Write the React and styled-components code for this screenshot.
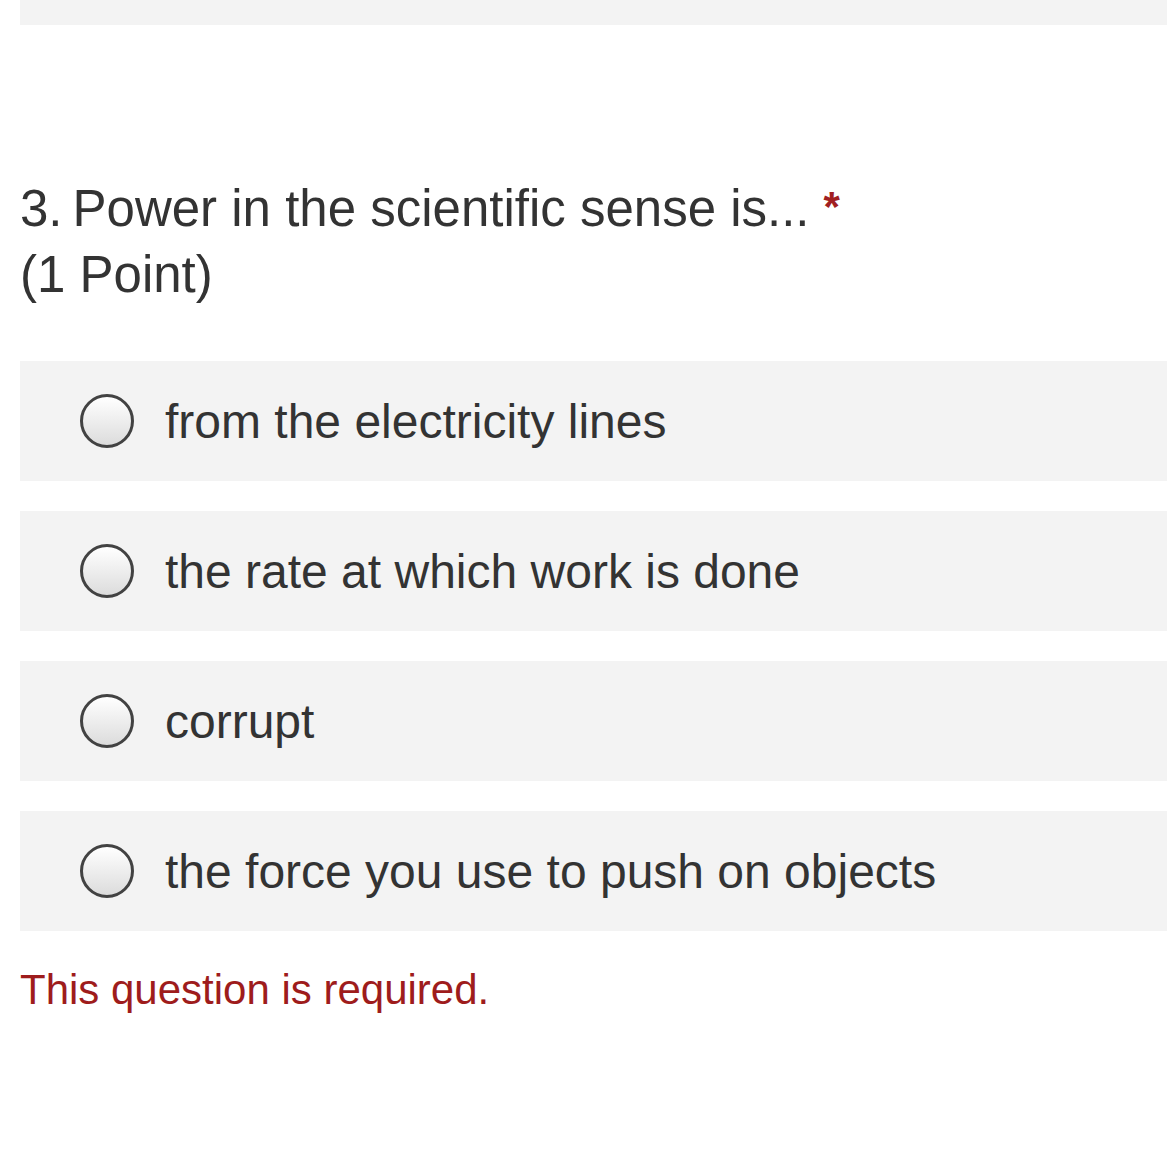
import React from "react";
import styled, { createGlobalStyle } from "styled-components";

const options = [
	"from the electricity lines",
	"the rate at which work is done",
	"corrupt",
	"the force you use to push on objects",
];

function App() {
	return (
		<>
			<GlobalStyle />
			<Page>
				<PrevBlock />
				<Title>
					<Number>3.</Number>
					Power in the scientific sense is...
					<Required>*</Required>
					<br />
					(1 Point)
				</Title>
				<Options>
					{options.map((text) => (
						<Option key={text}>
							<Radio />
							<Label>{text}</Label>
						</Option>
					))}
				</Options>
				<Error>This question is required.</Error>
			</Page>
		</>
	);
}

export default App;

const GlobalStyle = createGlobalStyle`
	html, body {
		margin: 0;
		padding: 0;
		background: #ffffff;
	}
	body {
		font-family: "Liberation Sans", Arial, sans-serif;
		color: #333333;
	}
`;

const Page = styled.div`
	padding-left: 20px;
	min-height: 1167px;
	box-sizing: border-box;
`;

const PrevBlock = styled.div`
	height: 25px;
	background: #f3f3f3;
`;

const Title = styled.div`
	margin-top: 151px;
	font-size: 51px;
	line-height: 66px;
	color: #333333;
`;

const Number = styled.span`
	margin-right: 10px;
`;

const Required = styled.span`
	color: #a11f22;
	font-size: 42px;
	font-weight: bold;
	line-height: 0;
	margin-left: 14px;
	vertical-align: 5px;
`;

const Options = styled.div`
	margin-top: 53px;
	display: flex;
	flex-direction: column;
	gap: 30px;
`;

const Option = styled.label`
	display: flex;
	align-items: center;
	height: 120px;
	padding-left: 60px;
	background: #f3f3f3;
	cursor: pointer;
`;

const Radio = styled.span`
	flex: none;
	width: 48px;
	height: 48px;
	border-radius: 50%;
	border: 3px solid #424242;
	background: linear-gradient(#ffffff, #dcdcdc);
	margin-right: 31px;
`;

const Label = styled.span`
	font-size: 48px;
	color: #333333;
`;

const Error = styled.div`
	margin-top: 35px;
	font-size: 42px;
	line-height: 48px;
	color: #9e1c1c;
`;
